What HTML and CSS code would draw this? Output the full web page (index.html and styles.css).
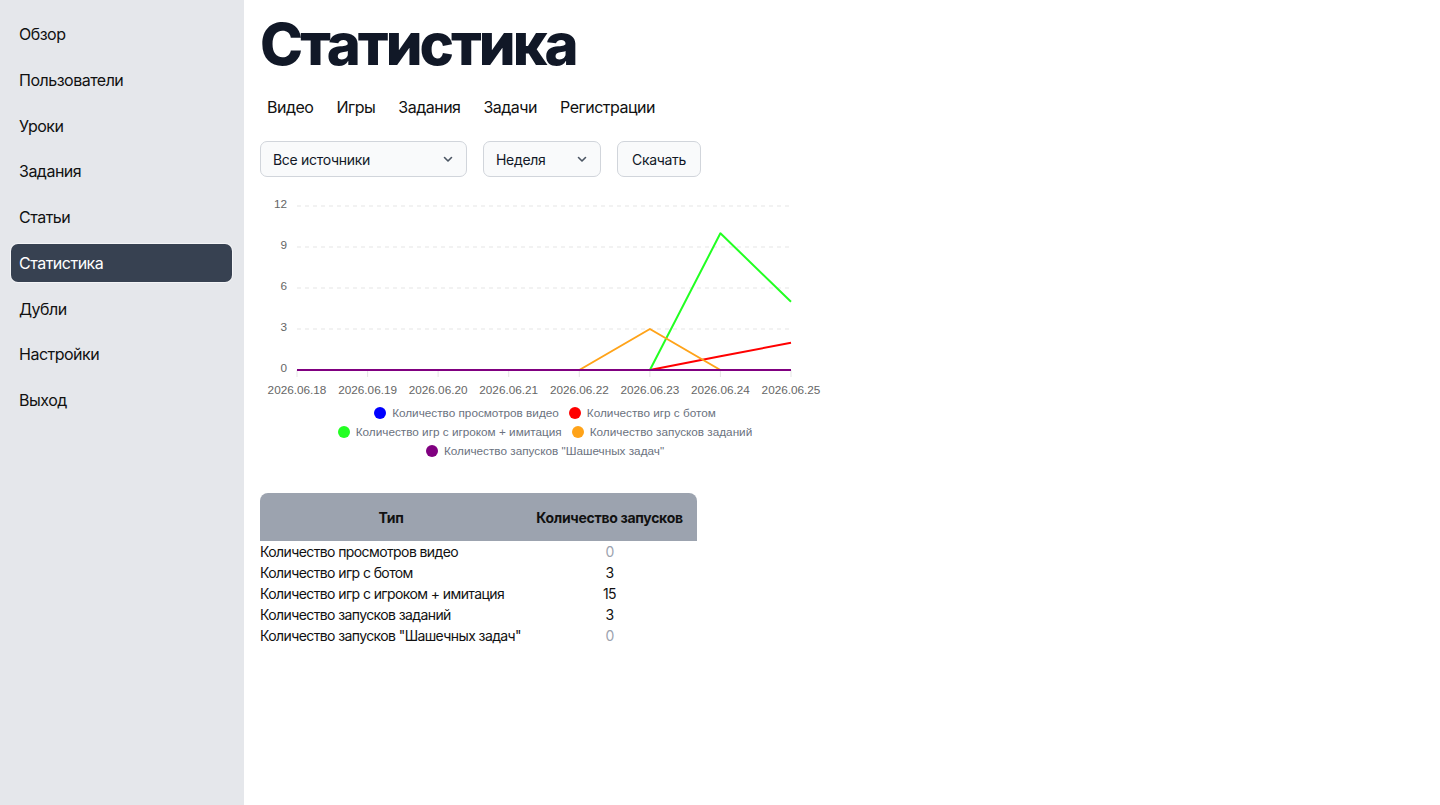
FILE: index.html
```html
<!DOCTYPE html>
<html lang="ru">
<head>
	<meta charset="utf-8">
	<title>Статистика</title>
	<link rel="stylesheet" href="styles.css">
</head>
<body>
	<div class="layout">
		<aside class="sidebar">
			<nav class="menu">
				<a href="#" class="menu-item">Обзор</a>
				<a href="#" class="menu-item">Пользователи</a>
				<a href="#" class="menu-item">Уроки</a>
				<a href="#" class="menu-item">Задания</a>
				<a href="#" class="menu-item">Статьи</a>
				<a href="#" class="menu-item active">Статистика</a>
				<a href="#" class="menu-item">Дубли</a>
				<a href="#" class="menu-item">Настройки</a>
				<a href="#" class="menu-item">Выход</a>
			</nav>
		</aside>

		<main class="content">
			<h1 class="title">Статистика</h1>

			<div class="tabs">
				<a href="#" class="tab">Видео</a>
				<a href="#" class="tab">Игры</a>
				<a href="#" class="tab">Задания</a>
				<a href="#" class="tab">Задачи</a>
				<a href="#" class="tab">Регистрации</a>
			</div>

			<div class="filters">
				<div class="select select-source">
					<span>Все источники</span>
					<svg class="chevron" width="12" height="12" viewBox="0 0 12 12"><path d="M2.5 4.5 6 8l3.5-3.5" fill="none" stroke="#4b5563" stroke-width="1.6" stroke-linecap="round" stroke-linejoin="round"/></svg>
				</div>
				<div class="select select-period">
					<span>Неделя</span>
					<svg class="chevron" width="12" height="12" viewBox="0 0 12 12"><path d="M2.5 4.5 6 8l3.5-3.5" fill="none" stroke="#4b5563" stroke-width="1.6" stroke-linecap="round" stroke-linejoin="round"/></svg>
				</div>
				<button class="btn">Скачать</button>
			</div>

			<div class="chart">
				<svg class="chart-svg" width="570" height="208" viewBox="0 0 570 208">
					<!-- grid -->
					<g stroke="#e5e5e5" stroke-width="1" stroke-dasharray="4 4">
						<line x1="37" y1="11" x2="531" y2="11"/>
						<line x1="37" y1="52" x2="531" y2="52"/>
						<line x1="37" y1="93" x2="531" y2="93"/>
						<line x1="37" y1="134" x2="531" y2="134"/>
					</g>
					<g stroke="#e5e5e5" stroke-width="1">
						<line x1="37" y1="175" x2="37" y2="182"/>
						<line x1="107.6" y1="175" x2="107.6" y2="182"/>
						<line x1="178.1" y1="175" x2="178.1" y2="182"/>
						<line x1="248.7" y1="175" x2="248.7" y2="182"/>
						<line x1="319.3" y1="175" x2="319.3" y2="182"/>
						<line x1="389.9" y1="175" x2="389.9" y2="182"/>
						<line x1="460.4" y1="175" x2="460.4" y2="182"/>
						<line x1="531" y1="175" x2="531" y2="182"/>
					</g>

					<!-- y labels -->
					<g class="axis-text" text-anchor="end">
						<text x="27" y="13">12</text>
						<text x="27" y="54">9</text>
						<text x="27" y="95">6</text>
						<text x="27" y="136">3</text>
						<text x="27" y="177">0</text>
					</g>

					<!-- x labels -->
					<g class="axis-text" text-anchor="middle">
						<text x="37" y="199">2026.06.18</text>
						<text x="107.6" y="199">2026.06.19</text>
						<text x="178.1" y="199">2026.06.20</text>
						<text x="248.7" y="199">2026.06.21</text>
						<text x="319.3" y="199">2026.06.22</text>
						<text x="389.9" y="199">2026.06.23</text>
						<text x="460.4" y="199">2026.06.24</text>
						<text x="531" y="199">2026.06.25</text>
					</g>

					<!-- series -->
					<g fill="none" stroke-width="2" stroke-linejoin="round">
						<polyline stroke="#0000ff" points="37,175 107.6,175 178.1,175 248.7,175 319.3,175 389.9,175 460.4,175 531,175"/>
						<polyline stroke="#ff0000" points="37,175 107.6,175 178.1,175 248.7,175 319.3,175 389.9,175 460.4,161.3 531,147.7"/>
						<polyline stroke="#22ff22" points="37,175 107.6,175 178.1,175 248.7,175 319.3,175 389.9,175 460.4,38.3 531,106.7"/>
						<polyline stroke="#ffa319" points="37,175 107.6,175 178.1,175 248.7,175 319.3,175 389.9,134 460.4,175 531,175"/>
						<polyline stroke="#800080" points="37,175 107.6,175 178.1,175 248.7,175 319.3,175 389.9,175 460.4,175 531,175"/>
					</g>
				</svg>

				<div class="legend">
					<div class="legend-row">
						<span class="legend-item"><i class="dot dot-blue"></i>Количество просмотров видео</span>
						<span class="legend-item"><i class="dot dot-red"></i>Количество игр с ботом</span>
					</div>
					<div class="legend-row">
						<span class="legend-item"><i class="dot dot-green"></i>Количество игр с игроком + имитация</span>
						<span class="legend-item"><i class="dot dot-orange"></i>Количество запусков заданий</span>
					</div>
					<div class="legend-row">
						<span class="legend-item"><i class="dot dot-purple"></i>Количество запусков "Шашечных задач"</span>
					</div>
				</div>
			</div>

			<table class="stats">
				<thead>
					<tr>
						<th class="col-type">Тип</th>
						<th class="col-count">Количество запусков</th>
					</tr>
				</thead>
				<tbody>
					<tr><td>Количество просмотров видео</td><td class="num zero">0</td></tr>
					<tr><td>Количество игр с ботом</td><td class="num">3</td></tr>
					<tr><td>Количество игр с игроком + имитация</td><td class="num">15</td></tr>
					<tr><td>Количество запусков заданий</td><td class="num">3</td></tr>
					<tr><td>Количество запусков "Шашечных задач"</td><td class="num zero">0</td></tr>
				</tbody>
			</table>
		</main>
	</div>
</body>
</html>
```

FILE: styles.css
```css
html, body {
	margin: 0;
	padding: 0;
}
body {
	font-family: Inter, "Noto Sans", sans-serif;
	color: #111827;
	background: #fff;
}
a {
	color: inherit;
	text-decoration: none;
}

.layout {
	display: flex;
	min-height: 100vh;
}

/* sidebar */
.sidebar {
	width: 244px;
	flex-shrink: 0;
	background: #e5e7eb;
	padding: 15px 12px 0 11px;
	box-sizing: border-box;
}
.menu {
	display: flex;
	flex-direction: column;
	gap: 7.75px;
}
.menu-item {
	display: block;
	height: 38px;
	line-height: 38px;
	padding: 0 8px;
	font-size: 16px;
	letter-spacing: -0.5px;
	border-radius: 7px;
	color: #111;
}
.menu-item.active {
	background: #374151;
	color: #fff;
	box-shadow: 0 0 0 1px #f3f4f6;
}

/* content */
.content {
	flex: 1;
	padding: 14px 16px 0 16px;
}
.title {
	margin: 0;
	font-size: 58px;
	line-height: 60px;
	font-weight: 800;
	letter-spacing: -3px;
	color: #111827;
}

.tabs {
	display: flex;
	gap: 9px;
	margin-top: 21px;
}
.tab {
	padding: 0 7px;
	font-size: 16px;
	line-height: 24px;
	letter-spacing: -0.5px;
	color: #111;
}

.filters {
	display: flex;
	gap: 16px;
	margin-top: 22px;
}
.select, .btn {
	height: 36px;
	box-sizing: border-box;
	border: 1px solid #d1d5db;
	border-radius: 7px;
	background: #f9fafb;
	font-family: Inter, "Noto Sans", sans-serif;
	font-size: 14px;
	letter-spacing: -0.3px;
	color: #111827;
}
.select {
	display: flex;
	align-items: center;
	justify-content: space-between;
	padding: 0 12px 0 12px;
}
.select-source { width: 207px; }
.select-period { width: 118px; }
.chevron { display: block; }
.btn {
	width: 84px;
	padding: 0;
	text-align: center;
}

/* chart */
.chart {
	width: 570px;
	margin-top: 18px;
}
.chart-svg {
	display: block;
}
.axis-text {
	font-family: "Liberation Sans", Arial, sans-serif;
	font-size: 11.75px;
	fill: #666;
}
.legend {
	font-family: "Liberation Sans", Arial, sans-serif;
	font-size: 11.75px;
	color: #6b7280;
}
.legend-row {
	display: flex;
	justify-content: center;
	gap: 10px;
	height: 19px;
	align-items: center;
}
.legend-item {
	display: flex;
	align-items: center;
	gap: 6px;
}
.dot {
	display: inline-block;
	width: 12px;
	height: 12px;
	border-radius: 50%;
}
.dot-blue { background: #0000ff; }
.dot-red { background: #ff0000; }
.dot-green { background: #22ff22; }
.dot-orange { background: #ffa319; }
.dot-purple { background: #800080; }

/* table */
.stats {
	margin-top: 33px;
	width: 437px;
	table-layout: fixed;
	border-collapse: separate;
	border-spacing: 0;
	font-size: 14px;
	color: #111;
}
.stats th {
	height: 48px;
	background: #9ca3af;
	font-weight: 700;
	text-align: center;
	padding: 0;
	letter-spacing: -0.3px;
	white-space: nowrap;
}
.stats th.col-type {
	width: 262px;
	border-top-left-radius: 8px;
}
.stats th.col-count {
	border-top-right-radius: 8px;
}
.stats td {
	height: 21px;
	padding: 0;
	line-height: 21px;
	letter-spacing: -0.6px;
	white-space: nowrap;
}
.stats td.num {
	text-align: center;
}
.stats td.zero {
	color: #9ca3af;
}
```
